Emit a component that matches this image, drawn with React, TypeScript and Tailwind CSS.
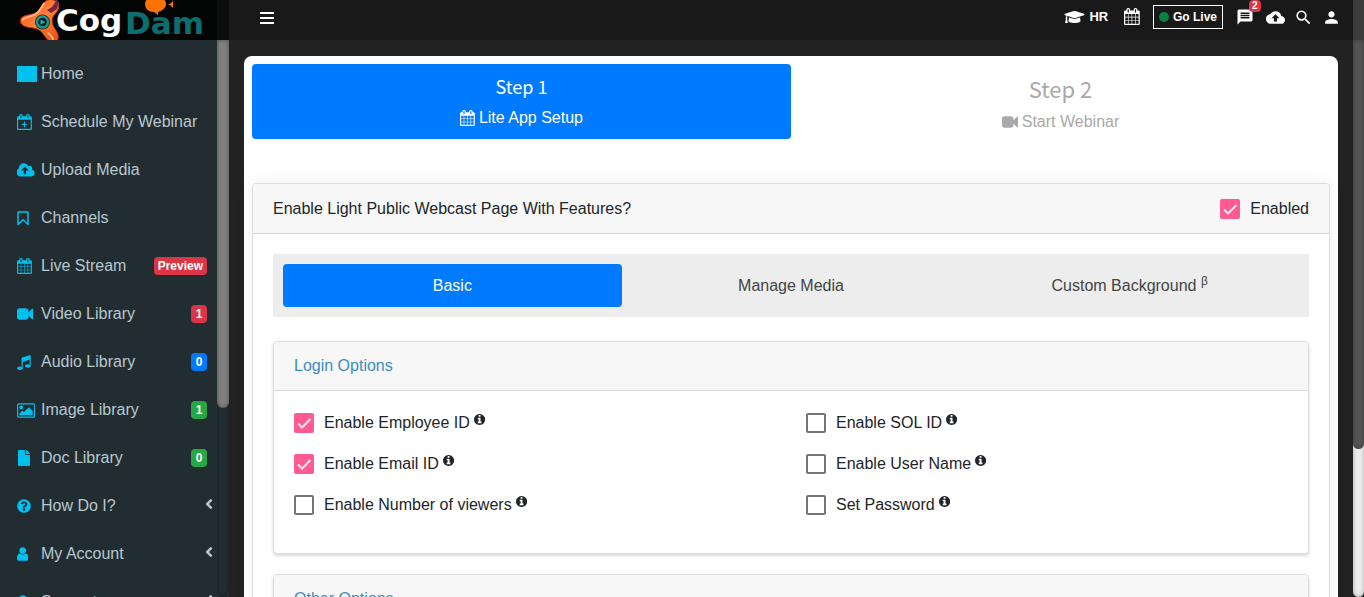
import type { ReactNode } from 'react';
import { FaAngleLeft, FaFile, FaGraduationCap, FaLock, FaQuestionCircle } from 'react-icons/fa';
import { MdBackup, MdMessage, MdPerson, MdSearch } from 'react-icons/md';

const sans = "font-['Liberation_Sans',Arial,sans-serif]";
const stepFont = "font-['Noto_Sans_CJK_SC','Noto_Sans',sans-serif]";

function Glyph({ d, box, className = 'h-4' }: { d: string; box: string; className?: string }) {
  return (
    <svg viewBox={box} className={`${className} w-auto shrink-0 fill-current`} aria-hidden="true">
      <path d={d} />
    </svg>
  );
}

const calendarPath =
  'M192 1664h288v-288h-288v288zM544 1664h320v-288h-320v288zM192 1312h288v-320h-288v320zM544 1312h320v-320h-320v320zM192 928h288v-288h-288v288zM928 1664h320v-288h-320v288zM544 928h320v-288h-320v288zM1312 1664h288v-288h-288v288zM928 1312h320v-320h-320v320zM576 448v-288q0-13-9.5-22.5t-22.5-9.5h-64q-13 0-22.5 9.5t-9.5 22.5v288q0 13 9.5 22.5t22.5 9.5h64q13 0 22.5-9.5t9.5-22.5zM1312 1312h288v-320h-288v320zM928 928h320v-288h-320v288zM1312 928h288v-288h-288v288zM1344 448v-288q0-13-9.5-22.5t-22.5-9.5h-64q-13 0-22.5 9.5t-9.5 22.5v288q0 13 9.5 22.5t22.5 9.5h64q13 0 22.5-9.5t9.5-22.5zM1728 384v1280q0 52-38 90t-90 38h-1408q-52 0-90-38t-38-90v-1280q0-52 38-90t90-38h128v-96q0-66 47-113t113-47h64q66 0 113 47t47 113v96h384v-96q0-66 47-113t113-47h64q66 0 113 47t47 113v96h128q52 0 90 38t38 90z';
const calendarPlusPath =
  'M192 1664h1408v-1024h-1408v1024zM576 448v-288q0-13-9.5-22.5t-22.5-9.5h-64q-13 0-22.5 9.5t-9.5 22.5v288q0 13 9.5 22.5t22.5 9.5h64q13 0 22.5-9.5t9.5-22.5zM1344 448v-288q0-13-9.5-22.5t-22.5-9.5h-64q-13 0-22.5 9.5t-9.5 22.5v288q0 13 9.5 22.5t22.5 9.5h64q13 0 22.5-9.5t9.5-22.5zM1728 384v1280q0 52-38 90t-90 38h-1408q-52 0-90-38t-38-90v-1280q0-52 38-90t90-38h128v-96q0-66 47-113t113-47h64q66 0 113 47t47 113v96h384v-96q0-66 47-113t113-47h64q66 0 113 47t47 113v96h128q52 0 90 38t38 90zM832 832h128v256h256v128h-256v256h-128v-256h-256v-128h256z';
const videoPath =
  'M1792 352v1088q0 42-39 59-13 5-25 5-27 0-45-19l-403-403v166q0 119-84.5 203.5t-203.5 84.5h-704q-119 0-203.5-84.5t-84.5-203.5v-704q0-119 84.5-203.5t203.5-84.5h704q119 0 203.5 84.5t84.5 203.5v165l403-402q18-19 45-19 12 0 25 5 39 17 39 59z';
const cloudPath =
  'M1216 864q0-14-9-23l-352-352q-9-9-23-9t-23 9l-351 351q-10 12-10 24 0 14 9 23t23 9h224v352q0 13 9.5 22.5t22.5 9.5h192q13 0 22.5-9.5t9.5-22.5v-352h224q13 0 22.5-9.5t9.5-22.5zm640 288q0 159-112.5 271.5t-271.5 112.5h-1088q-185 0-316.5-131.5t-131.5-316.5q0-130 70-240t188-165q-2-30-2-43 0-212 150-362t362-150q156 0 285.5 87t188.5 231q71-62 166-62 106 0 181 75t75 181q0 76-41 138 130 31 213.5 135.5t83.5 238.5z';
const musicPath =
  'M1536 224v1120q0 50-34 89t-86 60.5-103.5 32-96.5 10.5-96.5-10.5-103.5-32-86-60.5-34-89 34-89 86-60.5 103.5-32 96.5-10.5q105 0 192 39v-537l-768 237v709q0 50-34 89t-86 60.5-103.5 32-96.5 10.5-96.5-10.5-103.5-32-86-60.5-34-89 34-89 86-60.5 103.5-32 96.5-10.5q105 0 192 39v-967q0-31 19-56.5t49-35.5l832-256q12-4 28-4 40 0 68 28t28 68z';
const userPath =
  'M1536 1399q0 109-62.5 187t-150.5 78h-854q-88 0-150.5-78t-62.5-187q0-85 8.5-160.5t31.5-152 58.5-131 94-89 134.5-34.5q131 128 313 128t313-128q76 0 134.5 34.5t94 89 58.5 131 31.5 152 8.5 160.5zm-256-887q0 159-112.5 271.5t-271.5 112.5-271.5-112.5-112.5-271.5 112.5-271.5 271.5-112.5 271.5 112.5 112.5 271.5z';
const infoPath =
  'M1024 1376v-160q0-14-9-23t-23-9h-96v-512q0-14-9-23t-23-9h-320q-14 0-23 9t-9 23v160q0 14 9 23t23 9h96v320h-96q-14 0-23 9t-9 23v160q0 14 9 23t23 9h448q14 0 23-9t9-23zm-128-896v-160q0-14-9-23t-23-9h-192q-14 0-23 9t-9 23v160q0 14 9 23t23 9h192q14 0 23-9t9-23zm640 416q0 209-103 385.5t-279.5 279.5-385.5 103-385.5-103-279.5-279.5-103-385.5 103-385.5 279.5-279.5 385.5-103 385.5 103 279.5 279.5 103 385.5z';
const imagePath =
  'M640 576q0 80-56 136t-136 56-136-56-56-136 56-136 136-56 136 56 56 136zm1024 384v448h-1408v-192l320-320 160 160 512-512zm96-704h-1600q-13 0-22.5 9.5t-9.5 22.5v1216q0 13 9.5 22.5t22.5 9.5h1600q13 0 22.5-9.5t9.5-22.5v-1216q0-13-9.5-22.5t-22.5-9.5zm160 32v1216q0 66-47 113t-113 47h-1600q-66 0-113-47t-47-113v-1216q0-66 47-113t113-47h1600q66 0 113 47t47 113z';

const Calendar = ({ className }: { className?: string }) => (
  <Glyph d={calendarPath} box="64 0 1664 1792" className={className} />
);
const Video = () => <Glyph d={videoPath} box="0 0 1792 1792" />;

interface NavItem {
  label: string;
  icon: ReactNode;
  badge?: string;
  tone?: string;
  more?: boolean;
}

const items: NavItem[] = [
  { label: 'Home', icon: <span className="h-4 w-5 bg-[#00c0ef]" /> },
  { label: 'Schedule My Webinar', icon: <Glyph d={calendarPlusPath} box="64 0 1664 1792" /> },
  { label: 'Upload Media', icon: <Glyph d={cloudPath} box="0 0 1856 1792" className="h-[17px]" /> },
  {
    label: 'Channels',
    icon: (
      <svg viewBox="0 0 12 16" className="h-4 w-3 fill-none stroke-current" strokeWidth="1.5" aria-hidden="true">
        <path d="M1.500 2h9q.5 0 .5.5v12L6 9.800 1 14.500V2.500q0-.5.5-.5z" strokeLinejoin="round" />
      </svg>
    ),
  },
  { label: 'Live Stream', icon: <Calendar />, badge: 'Preview', tone: 'bg-[#dc3545]' },
  { label: 'Video Library', icon: <Video />, badge: '1', tone: 'bg-[#dc3545]' },
  { label: 'Audio Library', icon: <Glyph d={musicPath} box="0 0 1536 1792" />, badge: '0', tone: 'bg-[#007bff]' },
  {
    label: 'Image Library',
    icon: <Glyph d={imagePath} box="0 0 1920 1792" className="h-[17px]" />,
    badge: '1',
    tone: 'bg-[#28a745]',
  },
  { label: 'Doc Library', icon: <FaFile className="h-4 w-[14px]" />, badge: '0', tone: 'bg-[#28a745]' },
  { label: 'How Do I?', icon: <FaQuestionCircle className="size-[14px]" />, more: true },
  { label: 'My Account', icon: <Glyph d={userPath} box="256 0 1280 1792" />, more: true },
  { label: 'Support', icon: <FaLock className="h-4 w-3" />, more: true },
];

function Logo() {
  return (
    <svg viewBox="0 0 217 40" className="h-10 w-[217px]" role="img" aria-label="CogDam">
      <defs>
        <linearGradient id="spin" x1="0" y1="0" x2="1" y2="1">
          <stop offset="0" stopColor="#ff4a14" />
          <stop offset="0.5" stopColor="#ff8238" />
          <stop offset="1" stopColor="#f0480e" />
        </linearGradient>
      </defs>
      <path
        d="M20.500 21c0-5 5-5.500 10-6.500 5-1 8-3 10.500-7 2-4 4-7.500 9-8 6 0 10 4 8.500 9-1 4-5 6-6 9.500-1 4 0 7 2.500 11 2 3 4 6 3 10-1 4-8 4-11 0-3-3-4-7-8-9-4-2.500-8-2-12-3-4-1-6.500-3-6.500-6z"
        fill="url(#spin)"
        stroke="#c2330a"
        strokeWidth="0.8"
      />
      <path
        d="M23 19.500c3-3 8-2.500 12-5 4-2 6-7 9-11M48 33q3 2 5 6"
        fill="none"
        stroke="#ffb487"
        strokeWidth="1.8"
        strokeLinecap="round"
      />
      <path d="M47 10l5-3 4-6 2.500 2-1.500 6-6 4z" fill="#7a2440" />
      <path d="M56 0q4 2 2 6" fill="none" stroke="#6d4a7d" strokeWidth="1" />
      <circle cx="42.500" cy="22" r="7.500" fill="#3a1710" />
      <circle cx="42.500" cy="22" r="5.500" fill="#0b1c1e" stroke="#119c9a" strokeWidth="2.400" />
      <path d="M40.500 19.500l5 2.500-5 2.500z" fill="#19b3ae" />
      <text x="56" y="31" fontFamily="'DejaVu Sans', sans-serif" fontWeight="700" fontSize="31" fill="#fff">
        Cog
      </text>
      <text x="125" y="34" fontFamily="'DejaVu Sans', sans-serif" fontWeight="700" fontSize="31" fill="#0c6e6e">
        Dam
      </text>
      <path
        d="M145 4c0-5 5-7 11-7s10 3 10 7-4 7-8 8v3l-4-3c-5 0-9-3-9-8zM167 4.500q4 0 6-4v8q-2-4-6-4z"
        fill="#ff7300"
      />
    </svg>
  );
}

function Check({ label, checked = false, info = false }: { label: string; checked?: boolean; info?: boolean }) {
  return (
    <label className="flex h-10 items-center gap-[10px] text-[#212529]">
      <span className="grid size-5 shrink-0">
        <input
          type="checkbox"
          defaultChecked={checked}
          className="peer col-start-1 row-start-1 size-5 appearance-none rounded-xs border-2 border-[#757575] checked:border-[#ff5a92] checked:bg-[#ff5a92]"
        />
        <svg
          viewBox="0 0 20 20"
          className="pointer-events-none invisible col-start-1 row-start-1 size-5 fill-none stroke-[#ffe9f0] stroke-2 peer-checked:visible"
          aria-hidden="true"
        >
          <path d="M4 10.500l4 4 8.500-8.500" />
        </svg>
      </span>
      <span className="flex items-start gap-1">
        {label}
        {info && <Glyph d={infoPath} box="0 0 1536 1792" className="mt-[2px] h-[13px]" />}
      </span>
    </label>
  );
}

function Panel({ title, children }: { title: string; children?: ReactNode }) {
  return (
    <section className="rounded border border-[#dcdcdc] bg-white shadow-[0_2px_3px_rgba(60,40,20,0.18)]">
      <h3 className="flex h-[49px] items-center rounded-t border-b border-[#d8d8d8] bg-[#f7f7f7] px-5 text-[#3c8dbc]">
        {title}
      </h3>
      {children}
    </section>
  );
}

export default function App() {
  return (
    <div className={`${sans} flex h-screen flex-col overflow-hidden bg-[#222] text-base leading-6`}>
      <header className="flex h-10 shrink-0 bg-[#191919] text-white">
        <a href="#home" className="w-[217px] shrink-0 bg-[#030504]">
          <Logo />
        </a>
        <div className="w-3 shrink-0 bg-[#0d0d0d]" />
        <div className="flex min-w-0 grow items-center justify-between pr-3 pl-[31px]">
          <button type="button" aria-label="Toggle menu" className="-mt-1 flex w-[14px] flex-col gap-[3px]">
            <span className="h-[2px] bg-white" />
            <span className="h-[2px] bg-white" />
            <span className="h-[2px] bg-white" />
          </button>
          <nav className="-mt-[6px] flex items-center">
            <a href="#hr" className="mr-4 flex items-center gap-1 text-[13px] font-bold">
              <FaGraduationCap className="h-4 w-[21px]" />
              HR
            </a>
            <a href="#calendar" aria-label="Calendar" className="-mt-[2px] mr-[13px]">
              <Calendar className="h-[17px]" />
            </a>
            <button
              type="button"
              className="mr-[13px] flex h-6 w-[70px] items-center justify-between border border-white px-[5px] text-xs font-bold"
            >
              <span className="size-[10px] rounded-full bg-[#0b8043]" />
              Go Live
            </button>
            <button type="button" aria-label="Messages" className="relative mr-3">
              <MdMessage className="size-[18px]" />
              <span className="absolute -top-[8px] left-[13px] rounded-sm bg-[#dc3545] px-[3px] text-[10px] leading-3 font-bold">
                2
              </span>
            </button>
            <button type="button" aria-label="Upload" className="mr-[9px]">
              <MdBackup className="size-[19px]" />
            </button>
            <button type="button" aria-label="Search" className="mr-[9px]">
              <MdSearch className="size-[19px]" />
            </button>
            <button type="button" aria-label="Account">
              <MdPerson className="size-[19px]" />
            </button>
          </nav>
        </div>
        <div className="w-[11px] shrink-0 bg-[#3b3b3b]" />
      </header>

      <div className="flex min-h-0 grow">
        <aside className="flex w-[229px] shrink-0 bg-[#222d32]">
          <nav className="min-w-0 grow overflow-hidden pt-[10px]">
            <ul>
              {items.map((item) => (
                <li key={item.label}>
                  <a href="#menu" className="flex h-12 items-center pr-[10px] pl-[17px] text-[#b8c7ce]">
                    <span className="flex w-6 shrink-0 items-center text-[#00c0ef]">{item.icon}</span>
                    <span className="grow whitespace-nowrap">{item.label}</span>
                    {item.badge && (
                      <span
                        className={`${item.tone} min-w-4 rounded px-1 text-center text-xs leading-[18px] font-bold text-white`}
                      >
                        {item.badge}
                      </span>
                    )}
                    {item.more && <FaAngleLeft className="-mt-1 -mr-[10px] size-4" />}
                  </a>
                </li>
              ))}
            </ul>
          </nav>
          <div className="w-3 shrink-0 rounded-full bg-[#222d32] shadow-[inset_0_0_5px_rgba(0,0,0,0.35)]">
            <div className="h-[66%] rounded-b-md bg-[#808080] shadow-[inset_0_0_4px_rgba(0,0,0,0.4)]" />
          </div>
        </aside>

        <main className="min-w-0 grow overflow-hidden px-[15px] pt-4">
          <div className="rounded-lg bg-white p-2">
            <div className="grid grid-cols-2 text-center">
              <a href="#step1" className="h-[75px] rounded bg-[#007bff] pt-[10px] text-white">
                <span className={`${stepFont} block text-lg leading-6`}>Step 1</span>
                <span className="mt-2 flex items-center justify-center gap-1">
                  <Calendar />
                  Lite App Setup
                </span>
              </a>
              <a href="#step2" className="h-[75px] pt-[10px] text-[#a9a9a9]">
                <span className={`${stepFont} block text-[22px] leading-7`}>Step 2</span>
                <span className="mt-2 flex items-center justify-center gap-1">
                  <Video />
                  Start Webinar
                </span>
              </a>
            </div>

            <section className="mt-11 rounded border border-[#dcdcdc] shadow-[0_0_20px_rgba(0,0,0,0.06)]">
              <div className="flex h-[50px] items-center justify-between rounded-t border-b border-[#d8d8d8] bg-[#f7f7f7] px-5 text-[#212529]">
                <h2>Enable Light Public Webcast Page With Features?</h2>
                <Check label="Enabled" checked />
              </div>
              <div className="flex flex-col bg-white p-5">
                <div className="mb-6 grid grid-cols-3 bg-[#ededed] p-[10px] text-[#444]">
                  <button type="button" className="h-[43px] rounded bg-[#007bff] text-white">
                    Basic
                  </button>
                  <button type="button">Manage Media</button>
                  <button type="button">
                    Custom Background <sup className="text-xs">β</sup>
                  </button>
                </div>
                <div className="flex flex-col gap-5">
                  <Panel title="Login Options">
                    <div className="grid grid-cols-2 gap-x-[30px] gap-y-px px-5 pt-3 pb-7">
                      <Check label="Enable Employee ID" checked info />
                      <Check label="Enable SOL ID" info />
                      <Check label="Enable Email ID" checked info />
                      <Check label="Enable User Name" info />
                      <Check label="Enable Number of viewers" info />
                      <Check label="Set Password" info />
                    </div>
                  </Panel>
                  <Panel title="Other Options" />
                </div>
              </div>
            </section>
          </div>
        </main>

        <div className="w-[11px] shrink-0 rounded-b-md bg-[#f0f0f0] shadow-[inset_0_0_5px_rgba(0,0,0,0.3)]">
          <div className="h-[409px] rounded-b-md bg-[#555] shadow-[inset_0_0_5px_rgba(0,0,0,0.3)]" />
        </div>
      </div>
    </div>
  );
}
